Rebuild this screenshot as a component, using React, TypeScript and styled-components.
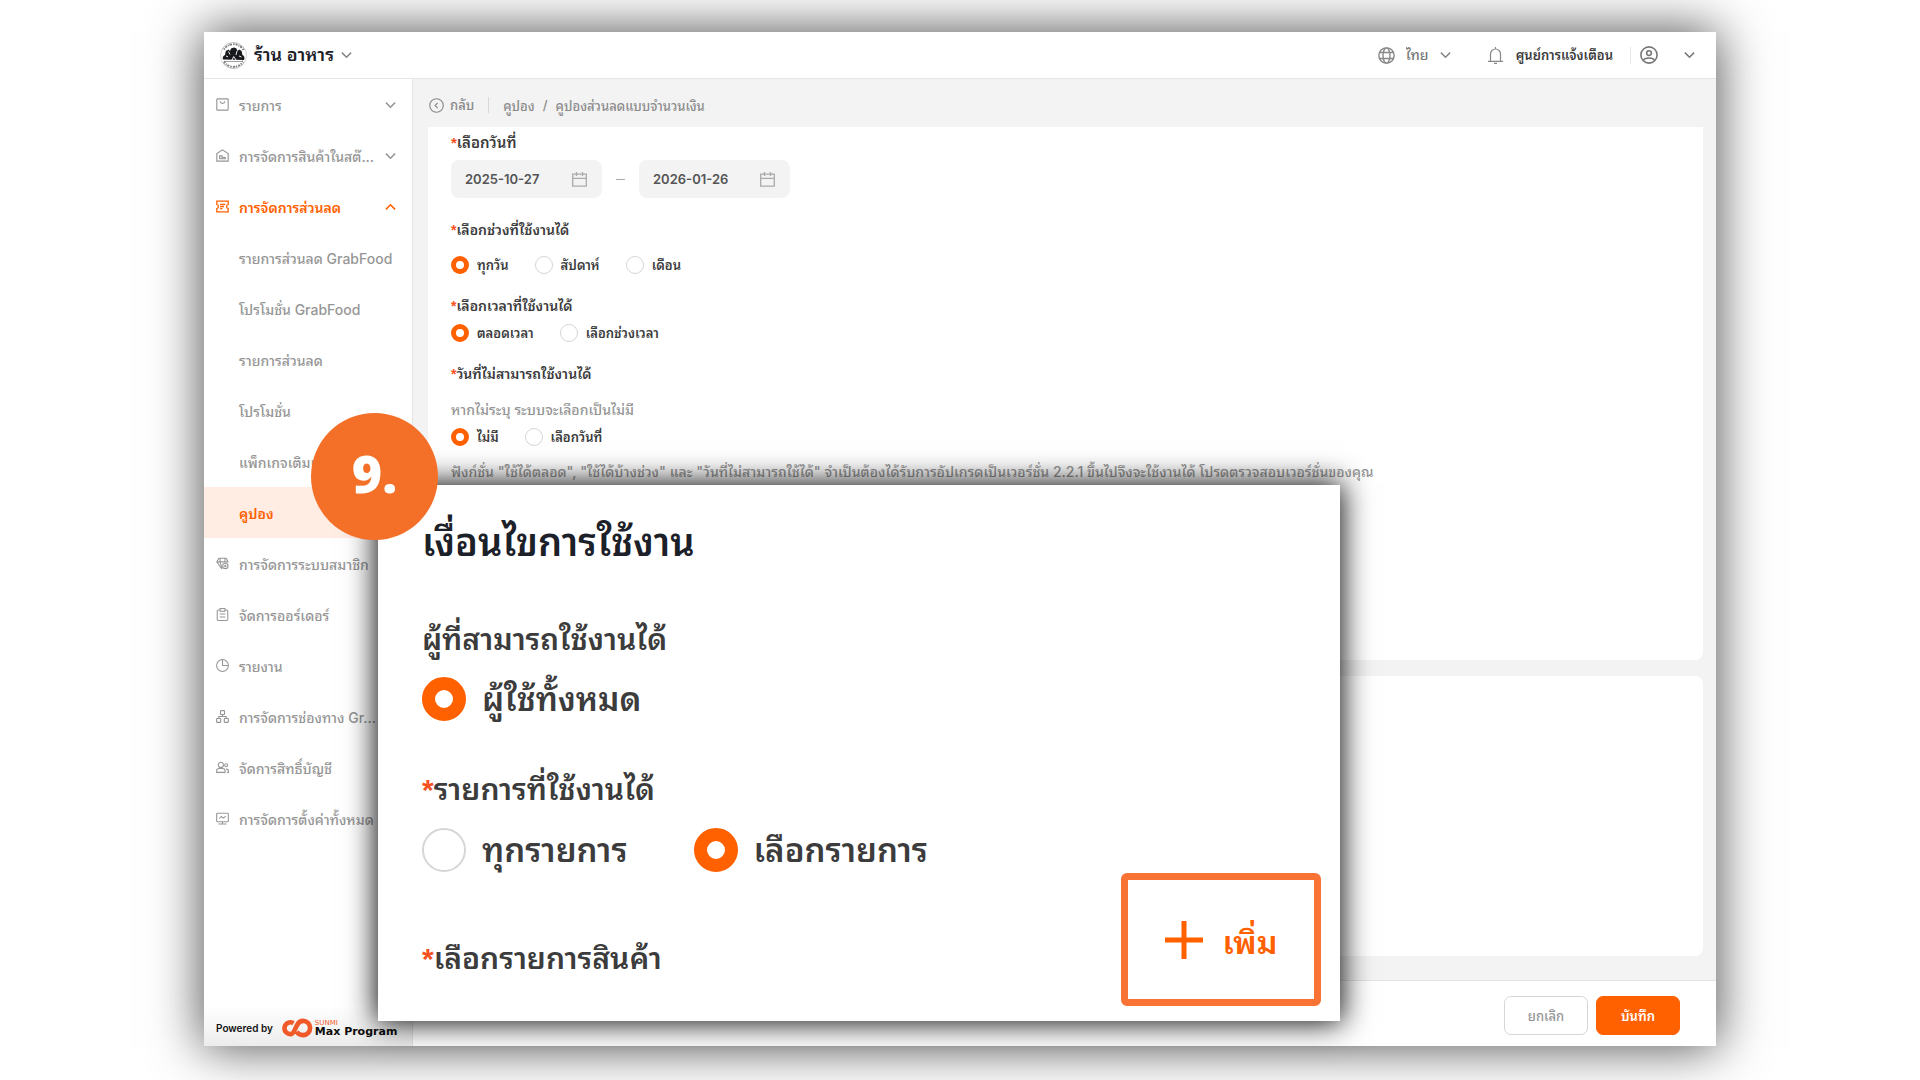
import React from "react";
import styled, { createGlobalStyle, css } from "styled-components";

const ORANGE = "#ff6000";
const CALLOUT = "#f47028";

const GlobalStyle = createGlobalStyle`
  *, *::before, *::after { box-sizing: border-box; }
  body { margin: 0; background: #fff; }
  body, button, input, select {
    font-family: Inter, Thonburi, "Noto Sans Thai Looped", Loma, Garuda, Waree, Umpush, "Noto Sans Thai", sans-serif;
    font-size: 14px;
    font-weight: 500;
  }
`;

const Stage = styled.div`
  display: flex;
  min-height: 100vh;
  padding: 32px 204px 34px;
  overflow: hidden;
`;

const Window = styled.div`
  position: relative;
  flex: 1;
  display: flex;
  flex-direction: column;
  background: #fff;
  box-shadow: 0 0 48px 2px rgba(0, 0, 0, 0.68);
`;

const Header = styled.header`
  display: flex;
  align-items: center;
  justify-content: space-between;
  height: 47px;
  padding: 0 21px 0 16px;
  border-bottom: 1px solid #e6e6e6;
`;

const HeaderGroup = styled.div`
  display: flex;
  align-items: center;
`;

const PickerWrap = styled.label<{ $gap: number }>`
  display: flex;
  align-items: center;
  gap: ${(p) => p.$gap}px;
  color: #888;
`;

const Picker = styled.select<{ $strong?: boolean }>`
  appearance: none;
  border: 0;
  padding: 0;
  background: none;
  line-height: 28px;
  color: #777;
  ${(p) =>
    p.$strong &&
    css`
      font-size: 18px;
      font-weight: 600;
      color: #1c2028;
    `}
`;

const PlainButton = styled.button<{ $gap?: number }>`
  display: flex;
  align-items: center;
  gap: ${(p) => p.$gap ?? 10}px;
  border: 0;
  padding: 0;
  background: none;
  color: #888;
`;

const NoticeButton = styled(PlainButton)`
  margin-left: 37px;
  padding-right: 17px;
  border-right: 1px solid #e8e8e8;
  line-height: 16px;
  strong { font-size: 13px; font-weight: 600; color: #3c3c3c; }
`;

const AccountButton = styled(PlainButton)`
  margin-left: 9px;
  color: #777;
`;

const Body = styled.div`
  flex: 1;
  display: flex;
`;

const Sidebar = styled.aside`
  display: flex;
  flex-direction: column;
  width: 209px;
  border-right: 1px solid #e4e4e4;
`;

const Nav = styled.nav`
  flex: 1;
  display: flex;
  flex-direction: column;
`;

const navRow = css<{ $active?: boolean; $selected?: boolean }>`
  display: grid;
  grid-template-columns: 14px 1fr 12px;
  align-items: center;
  column-gap: 9px;
  height: 51px;
  padding: 0 15px 0 12px;
  border: 0;
  background: ${(p) => (p.$selected ? "#ffede3" : "none")};
  color: ${(p) => (p.$active || p.$selected ? ORANGE : "#969696")};
  font-weight: ${(p) => (p.$active || p.$selected ? 600 : 500)};
  text-align: left;
  text-decoration: none;
  white-space: nowrap;
`;

const NavButton = styled.button<{ $active?: boolean }>`${navRow}`;
const NavLink = styled.a<{ $selected?: boolean }>`${navRow}`;

const NavText = styled.span`
  grid-column: 2;
  min-width: 0;
`;

const Powered = styled.div`
  display: flex;
  align-items: center;
  gap: 7px;
  height: 40px;
  padding: 4px 12px 0;
  background: linear-gradient(#fff, #ececec);
  font-size: 10px;
  font-weight: 600;
  color: #111;
`;

const Brand = styled.span`
  display: flex;
  flex-direction: column;
  margin-left: -6px;
  font-family: "DejaVu Sans", Inter, sans-serif;
  font-size: 11px;
  line-height: 11px;
  font-weight: 700;
  color: #0d0d0d;
  white-space: nowrap;
  small { font-size: 7px; line-height: 6px; color: #f05a28; font-weight: 400; }
`;

const Main = styled.main`
  flex: 1;
  display: flex;
  flex-direction: column;
  background: #f3f3f3;
`;

const Crumbs = styled.div`
  display: flex;
  align-items: center;
  height: 48px;
  padding: 4px 16px 0;
  font-size: 13px;
  color: #8c8c8c;
`;

const Back = styled(PlainButton)`
  padding-right: 14px;
  border-right: 1px solid #d8d8d8;
  font-size: 13px;
  line-height: 16px;
`;

const CrumbLink = styled.a`
  margin-left: 14px;
  color: inherit;
  text-decoration: none;
`;

const Slash = styled.span`
  margin: 0 8px;
`;

const Cards = styled.div`
  flex: 1;
  display: flex;
  flex-direction: column;
  gap: 16px;
  padding: 0 13px 24px 15px;
`;

const Card = styled.section<{ $fill?: boolean }>`
  padding: 6px 23px 178px;
  background: #fff;
  border-radius: ${(p) => (p.$fill ? "8px" : "0 0 8px 8px")};
  ${(p) => p.$fill && "flex: 1;"}
`;

const Group = styled.fieldset<{ $space: number }>`
  margin: 0 0 ${(p) => p.$space}px;
  border: 0;
  padding: 0;
`;

const Legend = styled.legend<{ $gap: number; $large?: boolean }>`
  padding: 0;
  margin-bottom: ${(p) => p.$gap}px;
  line-height: 20px;
  font-size: ${(p) => (p.$large ? 15 : 14)}px;
  font-weight: 600;
  color: #3c3c3c;
`;

const Star = styled.span`
  font-family: "Liberation Sans", sans-serif;
  font-weight: 700;
  color: #f4511e;
`;

const Row = styled.div<{ $gap: number }>`
  display: flex;
  align-items: center;
  gap: ${(p) => p.$gap}px;
`;

const DateBox = styled.label`
  display: flex;
  align-items: center;
  justify-content: space-between;
  width: 151px;
  height: 38px;
  padding: 0 15px 0 14px;
  border-radius: 8px;
  background: #f3f3f3;
  color: #aaa;
`;

const DateInput = styled.input`
  width: 90px;
  border: 0;
  padding: 0;
  background: none;
  font-size: 13px;
  font-weight: 600;
  color: #555;
`;

const Dash = styled.span`
  width: 9px;
  height: 1px;
  margin: 0 14px;
  background: #aaa;
`;

const Option = styled.label<{ $big?: boolean }>`
  display: flex;
  align-items: center;
  gap: ${(p) => (p.$big ? 16 : 8)}px;
  line-height: ${(p) => (p.$big ? 44 : 18)}px;
  font-size: ${(p) => (p.$big ? 33 : 13)}px;
  font-weight: 600;
  color: #3c3c3c;
`;

const Radio = styled.input<{ $big?: boolean }>`
  appearance: none;
  width: ${(p) => (p.$big ? 44 : 18)}px;
  height: ${(p) => (p.$big ? 44 : 18)}px;
  margin: 0;
  border: ${(p) => (p.$big ? 2 : 1)}px solid #d6d6d6;
  border-radius: 50%;
  background: #fff;
  &:checked { border: ${(p) => (p.$big ? 13 : 5)}px solid ${ORANGE}; }
`;

const Hint = styled.p<{ $gap: number }>`
  margin: 0 0 ${(p) => p.$gap}px;
  line-height: 20px;
  color: #969696;
  white-space: nowrap;
`;

const Footer = styled.footer`
  display: flex;
  align-items: center;
  justify-content: flex-end;
  gap: 8px;
  height: 66px;
  padding: 4px 36px 0;
  border-top: 1px solid #e4e4e4;
  background: #fff;
`;

const ActionButton = styled.button<{ $primary?: boolean }>`
  width: 84px;
  height: 39px;
  border: 1px solid ${(p) => (p.$primary ? ORANGE : "#d6d6d6")};
  border-radius: 7px;
  background: ${(p) => (p.$primary ? ORANGE : "#fff")};
  color: ${(p) => (p.$primary ? "#fff" : "#969696")};
  font-size: 13px;
  font-weight: ${(p) => (p.$primary ? 600 : 500)};
`;

const Zoomed = styled.section`
  position: absolute;
  top: 453px;
  left: 174px;
  right: 376px;
  bottom: 25px;
  padding: 32px 44px;
  background: #fff;
  box-shadow: 0 0 28px 2px rgba(0, 0, 0, 0.96);
`;

const ZoomedTitle = styled.h2`
  margin: 0 0 50px;
  line-height: 50px;
  font-size: 38px;
  font-weight: 600;
  color: #1c2028;
`;

const ZoomedLegend = styled.legend<{ $gap: number }>`
  padding: 0;
  margin-bottom: ${(p) => p.$gap}px;
  line-height: 44px;
  font-size: 30px;
  font-weight: 600;
  color: #3c3c3c;
`;

const AddButton = styled.button`
  position: absolute;
  right: 19px;
  bottom: 15px;
  display: flex;
  align-items: center;
  justify-content: center;
  gap: 20px;
  width: 200px;
  height: 133px;
  border: 7px solid #f97434;
  border-radius: 6px;
  background: #fff;
  color: ${ORANGE};
  font-size: 32px;
  font-weight: 600;
`;

const StepBadge = styled.div`
  position: absolute;
  top: 381px;
  left: 107px;
  display: grid;
  place-items: center;
  width: 127px;
  height: 127px;
  padding-bottom: 8px;
  border-radius: 50%;
  background: ${CALLOUT};
  color: #fff;
  font-family: "Open Sans", sans-serif;
  font-size: 52px;
  line-height: 54px;
  font-weight: 800;
`;

const Svg = ({ size = 13, sw = 1.2, children }: { size?: number; sw?: number; children: React.ReactNode }) => (
  <svg width={size} height={size} viewBox="0 0 16 16" fill="none" stroke="currentColor" strokeWidth={sw} aria-hidden="true">
    {children}
  </svg>
);

const Chevron = ({ up }: { up?: boolean }) => (
  <svg width="11" height="8" viewBox="0 0 12 8" fill="none" stroke="currentColor" strokeWidth="1.7" aria-hidden="true">
    <path d={up ? "M1 6.6 6 1.6l5 5" : "M1 1.4l5 5 5-5"} />
  </svg>
);

const icons: Record<string, React.ReactNode> = {
  list: <Svg sw={1.4}><rect x="1" y="1" width="14" height="14" rx="1" /><path d="M5 4c.5 3.400 5.500 3.400 6 0" /></Svg>,
  stock: <Svg sw={1.4}><path d="M1 15V5.500L8 1l7 4.500V15zM4.500 12V8.500h3V12zM7.500 10.500h4V12h-7" /></Svg>,
  coupon: <Svg sw={1.6}><path d="M1 1.500h14V5.500c-2.600.6-2.600 4.400 0 5v4H1v-4c2.600-.6 2.600-4.400 0-5zM5 5.500h6.500M5 8h5M5 10.500h3" /></Svg>,
  member: <Svg sw={1.300}><path d="M7 14.500 1 6l2.500-4.500h9L15 6M1 6h14M5 6l2.500 8.500M5 6V1.500M11 6V1.500" /><circle cx="11.500" cy="11" r="3.300" /><circle cx="11.500" cy="11" r=".8" /></Svg>,
  order: <Svg sw={1.300}><rect x="1.500" y="2.500" width="13" height="12.800" rx="1.500" /><rect x="5" y=".7" width="6" height="3.300" fill="#fff" /><path d="M4.500 7.500h7M4.500 11h7" /></Svg>,
  report: <Svg sw={1.300}><circle cx="8" cy="8" r="7.300" /><path d="M8 .7V8h7.300" /></Svg>,
  channel: <Svg sw={1.400}><rect x="5.500" y=".8" width="5" height="4.700" rx=".6" /><rect x=".8" y="10.500" width="5" height="4.700" rx=".6" /><rect x="10.200" y="10.500" width="5" height="4.700" rx=".6" /><path d="M8 5.500V8M3.500 10.500V8h9v2.500" /></Svg>,
  account: <Svg sw={1.300}><circle cx="6" cy="4.800" r="3.200" /><path d="M.8 14v-2c0-1.800 1-2.800 3-2.800h4.400c2 0 3 1 3 2.800v2z" /><circle cx="12.500" cy="5.200" r="1.800" /><path d="M12.300 10c2 0 3 1 3 2.300V14h-1.600" /></Svg>,
  settings: <Svg sw={1.300}><rect x=".8" y="1.500" width="14.400" height="10.500" rx="1" /><path d="M4 8l2.500-2.500 2.500 2L12 5M8 12v2.700M3 14.700h10" /></Svg>,
};

const Calendar = () => (
  <svg width="15" height="15" viewBox="0 0 15 15" fill="none" stroke="currentColor" strokeWidth="1.300" aria-hidden="true">
    <path d="M.7 2.200h13.600v12H.7zM.7 6.300h13.600M4.500 0v4M10.500 0v4" />
  </svg>
);

const ShopLogo = () => (
  <svg width="27" height="27" viewBox="0 0 27 27" aria-hidden="true">
    <circle cx="13.500" cy="13.500" r="13" fill="#fff" stroke="#bbb" strokeWidth=".6" />
    <circle cx="13.500" cy="13.500" r="11.300" fill="none" stroke="#444" strokeWidth="1.800" strokeDasharray="2 1 1 .8 2.500 1.200 1.500 1" opacity=".7" />
    <path d="M0 8h4v12H0zM23 8h4v12h-4z" fill="#fff" />
    <circle cx="13.500" cy="13.500" r="13" fill="none" stroke="#bbb" strokeWidth=".6" />
    <path d="M3 17.500c-.8-2 .2-4 2-4.500l.8-4 2.700-1.500 1.500 1.500 1-2.500 3-1 2.500 1 .8 2.500 2-1.500 2.300 1.500.8 4c2 .7 2.600 3 1.600 5z" fill="#17191c" />
    <path d="M8.500 9.500l1.500 3M17 9l-1 4M12 18l1.700-3.500L16 18M6 14l2 .8M19 14l2.500 1" stroke="#fff" strokeWidth=".9" fill="none" />
    <path d="M5 19.500h17" stroke="#777" strokeWidth=".7" />
  </svg>
);

const MaxLogo = () => (
  <svg width="34" height="20" viewBox="0 0 34 20" fill="none" stroke="#f05a28" strokeWidth="4.600" aria-hidden="true">
    <path d="M13.500 5.200A5.900 5.900 0 1 0 11.500 16C16 14.500 15.500 2.900 23 2.900a7 7 0 0 1 0 14.200c-3 0-5-1.300-6.300-3.300" />
  </svg>
);

const Bell = () => (
  <svg width="15" height="17" viewBox="0 0 15 17" fill="none" stroke="currentColor" strokeWidth="1.200" aria-hidden="true">
    <path d="M7.500 0v1.500M2.500 14V7a5 5 0 0 1 10 0v7M0 14.300h15M6 16.300h3" />
  </svg>
);

type Item = { icon?: string; label: string; open?: boolean; closed?: boolean; selected?: boolean };

const items: Item[] = [
  { icon: "list", label: "รายการ", closed: true },
  { icon: "stock", label: "การจัดการสินค้าในสต๊...", closed: true },
  { icon: "coupon", label: "การจัดการส่วนลด", open: true },
  { label: "รายการส่วนลด GrabFood" },
  { label: "โปรโมชั่น GrabFood" },
  { label: "รายการส่วนลด" },
  { label: "โปรโมชั่น" },
  { label: "แพ็กเกจเติมเงิน" },
  { label: "คูปอง", selected: true },
  { icon: "member", label: "การจัดการระบบสมาชิก" },
  { icon: "order", label: "จัดการออร์เดอร์" },
  { icon: "report", label: "รายงาน" },
  { icon: "channel", label: "การจัดการช่องทาง Gr..." },
  { icon: "account", label: "จัดการสิทธิ์บัญชี" },
  { icon: "settings", label: "การจัดการตั้งค่าทั้งหมด" },
];

const Choice = ({ name, label, checked, big }: { name: string; label: string; checked?: boolean; big?: boolean }) => (
  <Option $big={big}>
    <Radio type="radio" name={name} defaultChecked={checked} $big={big} />
    {label}
  </Option>
);

export default function App() {
  return (
    <>
      <GlobalStyle />
      <Stage>
        <Window>
          <Header>
            <HeaderGroup>
              <PickerWrap $gap={7}>
                <ShopLogo />
                <Picker $strong aria-label="ร้าน">
                  <option>ร้าน อาหาร</option>
                </Picker>
                <Chevron />
              </PickerWrap>
            </HeaderGroup>
            <HeaderGroup>
              <PickerWrap $gap={11}>
                <Svg size={17} sw={1.3}>
                  <circle cx="8" cy="8" r="7.200" />
                  <ellipse cx="8" cy="8" rx="3.300" ry="7.200" />
                  <path d="M1.500 5.200h13M1.500 10.800h13" />
                </Svg>
                <Picker aria-label="ภาษา">
                  <option>ไทย</option>
                </Picker>
                <Chevron />
              </PickerWrap>
              <NoticeButton $gap={13} type="button">
                <Bell />
                <strong>ศูนย์การแจ้งเตือน</strong>
              </NoticeButton>
              <AccountButton $gap={26} type="button" aria-label="บัญชี">
                <Svg size={18} sw={1.400}>
                  <circle cx="8" cy="8" r="7.200" />
                  <circle cx="8" cy="6.300" r="2.100" />
                  <path d="M3 13c1-3.200 9-3.200 10 0" />
                </Svg>
                <Chevron />
              </AccountButton>
            </HeaderGroup>
          </Header>
          <Body>
            <Sidebar>
              <Nav>
                {items.map((it) =>
                  it.open || it.closed ? (
                    <NavButton key={it.label} type="button" $active={it.open} aria-expanded={!!it.open}>
                      {icons[it.icon!]}
                      <NavText>{it.label}</NavText>
                      <Chevron up={it.open} />
                    </NavButton>
                  ) : (
                    <NavLink key={it.label} href="#" $selected={it.selected}>
                      {it.icon && icons[it.icon]}
                      <NavText>{it.label}</NavText>
                    </NavLink>
                  )
                )}
              </Nav>
              <Powered>
                Powered by
                <MaxLogo />
                <Brand>
                  <small>SUNMI</small>
                  Max Program
                </Brand>
              </Powered>
            </Sidebar>
            <Main>
              <Crumbs>
                <Back $gap={6} type="button">
                  <Svg size={15}>
                    <circle cx="8" cy="8" r="7.200" />
                    <path d="M9.300 5.200 6.500 8l2.800 2.800" />
                  </Svg>
                  กลับ
                </Back>
                <CrumbLink href="#">คูปอง</CrumbLink>
                <Slash>/</Slash>
                <span>คูปองส่วนลดแบบจำนวนเงิน</span>
              </Crumbs>
              <Cards>
                <Card>
                  <Group $space={22}>
                    <Legend $gap={7} $large><Star>*</Star>เลือกวันที่</Legend>
                    <Row $gap={0}>
                      <DateBox>
                        <DateInput type="text" defaultValue="2025-10-27" aria-label="วันที่เริ่มต้น" />
                        <Calendar />
                      </DateBox>
                      <Dash />
                      <DateBox>
                        <DateInput type="text" defaultValue="2026-01-26" aria-label="วันที่สิ้นสุด" />
                        <Calendar />
                      </DateBox>
                    </Row>
                  </Group>
                  <Group $space={22}>
                    <Legend $gap={16}><Star>*</Star>เลือกช่วงที่ใช้งานได้</Legend>
                    <Row $gap={26}>
                      <Choice name="period" label="ทุกวัน" checked />
                      <Choice name="period" label="สัปดาห์" />
                      <Choice name="period" label="เดือน" />
                    </Row>
                  </Group>
                  <Group $space={22}>
                    <Legend $gap={8}><Star>*</Star>เลือกเวลาที่ใช้งานได้</Legend>
                    <Row $gap={26}>
                      <Choice name="time" label="ตลอดเวลา" checked />
                      <Choice name="time" label="เลือกช่วงเวลา" />
                    </Row>
                  </Group>
                  <Group $space={16}>
                    <Legend $gap={16}><Star>*</Star>วันที่ไม่สามารถใช้งานได้</Legend>
                    <Hint $gap={8}>หากไม่ระบุ ระบบจะเลือกเป็นไม่มี</Hint>
                    <Row $gap={26}>
                      <Choice name="blocked" label="ไม่มี" checked />
                      <Choice name="blocked" label="เลือกวันที่" />
                    </Row>
                  </Group>
                  <Hint $gap={0}>
                    ฟังก์ชั่น "ใช้ได้ตลอด", "ใช้ได้บ้างช่วง" และ "วันที่ไม่สามารถใช้ได้" จำเป็นต้องได้รับการอัปเกรดเป็นเวอร์ชั่น 2.2.1 ขึ้นไปจึงจะใช้งานได้ โปรดตรวจสอบเวอร์ชั่นของคุณ
                  </Hint>
                </Card>
                <Card $fill />
              </Cards>
              <Footer>
                <ActionButton type="button">ยกเลิก</ActionButton>
                <ActionButton type="button" $primary>บันทึก</ActionButton>
              </Footer>
            </Main>
          </Body>
          <Zoomed>
            <ZoomedTitle>เงื่อนไขการใช้งาน</ZoomedTitle>
            <Group $space={46}>
              <ZoomedLegend $gap={16}>ผู้ที่สามารถใช้งานได้</ZoomedLegend>
              <Choice name="users" label="ผู้ใช้ทั้งหมด" checked big />
            </Group>
            <Group $space={64}>
              <ZoomedLegend $gap={16}><Star>*</Star>รายการที่ใช้งานได้</ZoomedLegend>
              <Row $gap={66}>
                <Choice name="products" label="ทุกรายการ" big />
                <Choice name="products" label="เลือกรายการ" checked big />
              </Row>
            </Group>
            <Group $space={0}>
              <ZoomedLegend $gap={0}><Star>*</Star>เลือกรายการสินค้า</ZoomedLegend>
            </Group>
            <AddButton type="button">
              <svg width="38" height="38" viewBox="0 0 38 38" fill="none" stroke="currentColor" strokeWidth="5" aria-hidden="true">
                <path d="M0 19h38M19 0v38" />
              </svg>
              เพิ่ม
            </AddButton>
          </Zoomed>
          <StepBadge>9.</StepBadge>
        </Window>
      </Stage>
    </>
  );
}
